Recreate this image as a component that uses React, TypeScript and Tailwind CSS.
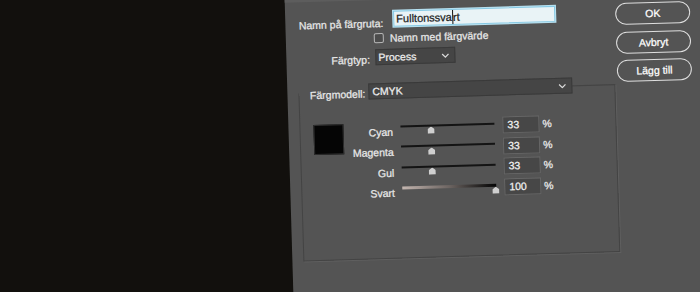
import React from "react";

const Chevron = () => (
  <svg width="8" height="5" viewBox="0 0 8 5" className="shrink-0">
    <polyline points="0.8,0.8 4,4 7.2,0.8" fill="none" stroke="#d8d8d8" strokeWidth="1.3" />
  </svg>
);

const Thumb = () => (
  <svg width="7" height="7" viewBox="0 0 7 7">
    <polygon points="3.5,0 7,2.6 7,7 0,7 0,2.6" fill="#cfcfcf" />
  </svg>
);

type Row = { label: string; value: number; gradient?: boolean };
const rows: Row[] = [
  { label: "Cyan", value: 33 },
  { label: "Magenta", value: 33 },
  { label: "Gul", value: 33 },
  { label: "Svart", value: 100, gradient: true },
];

export default function App() {
  return (
    <div className="relative w-[700px] h-[292px] overflow-hidden bg-[#12100d] font-['Liberation_Sans',Arial,sans-serif] text-[10.5px] text-[#e8e8e8] [-webkit-text-stroke-width:0.25px]">
      <div className="flex w-[740px] h-[340px] -ml-[20px] -mt-[24px] -rotate-[1.7deg]">
        <div className="w-[309px] h-full bg-[#12100d] shrink-0" />
        <div className="flex-1 h-full bg-[#545454] flex flex-col">
          <div className="h-[25px] bg-[#5d5d5d]" />
          <div className="flex">
            {/* left column */}
            <div className="w-[328px] flex flex-col shrink-0">
              <div className="flex h-[16px] mt-[11px]">
                <div className="w-[98px] text-right pt-[4px] leading-[16px] whitespace-nowrap">Namn på färgruta:</div>
                <div className="ml-[10px] w-[162px] h-[16px] bg-[#e9f3f6] border border-[#86c9e4] shadow-[0_0_0_1px_#b5e0f0] flex items-center pl-[2px] text-[11px] text-[#1e1e1e] leading-[14px]">
                  Fulltonssva
                  <span className="inline-block w-px h-[14px] bg-[#111]" />
                  rt
                </div>
              </div>
              <div className="flex items-center mt-[6px] pl-[88px] h-[10px]">
                <div className="w-[10px] h-[10px] border border-[#b8b8b8] rounded-[2px] bg-[#4c4c4c]" />
                <div className="ml-[6px] leading-[12px] whitespace-nowrap">Namn med färgvärde</div>
              </div>
              <div className="flex h-[16px] mt-[6px]">
                <div className="w-[83.5px] text-right pt-[2px] leading-[16px]">Färgtyp:</div>
                <div className="ml-[5.5px] w-[79.5px] h-[16px] bg-[#454545] border border-[#3a3a3a] flex items-center justify-between pl-[2px] pr-[5px] text-[#ececec] leading-[14px]">
                  <span>Process</span>
                  <Chevron />
                </div>
              </div>
              <fieldset className="mt-[18px] ml-[11px] w-[317px] h-[176px] border border-[#444] shadow-[1px_1px_0_#5f5f5f]">
                <legend className="p-0">
                  <div className="flex h-[16px] pl-[10.5px]">
                    <div className="w-[58.5px] leading-[16px] pt-[2px] whitespace-nowrap">Färgmodell:</div>
                    <div className="w-[204px] h-[16px] bg-[#454545] border border-[#3a3a3a] flex items-center justify-between pl-[3px] pr-[5px] text-[#ececec] leading-[14px]">
                      <span>CMYK</span>
                      <Chevron />
                    </div>
                  </div>
                </legend>
                <div className="flex">
                  <div className="ml-[13px] mt-[24px] w-[30px] h-[30px] bg-[#050505] border border-[#2e2e2e] shrink-0" />
                  <div className="mt-[21px] flex flex-col">
                    {rows.map((r) => (
                      <div key={r.label} className="flex items-start h-[20.5px]">
                        <div className="w-[49.5px] text-right leading-[16px] mt-[3.5px]">{r.label}</div>
                        <div className="relative ml-[7px] w-[94px] h-full">
                          <div
                            className={
                              r.gradient
                                ? "mt-[5px] h-[3px] bg-gradient-to-r from-[#c4b6b0] via-[#6d6562] to-[#060606]"
                                : "mt-[5.5px] h-[2px] bg-[#141414]"
                            }
                          />
                          <div className="absolute top-[8px] -ml-[3.5px]" style={{ left: `${r.value}%` }}>
                            <Thumb />
                          </div>
                        </div>
                        <div className="ml-[8.5px] w-[37px] h-[17px] bg-[#474747] border border-[#666] pl-[4px] leading-[15px] text-[#f0f0f0]">
                          {r.value}
                        </div>
                        <div className="ml-[3px] leading-[16px]">%</div>
                      </div>
                    ))}
                  </div>
                </div>
              </fieldset>
            </div>
            {/* buttons */}
            <div className="w-[75px] ml-[2px] pt-[10px] flex flex-col gap-[6.5px] shrink-0">
              {["OK", "Avbryt", "Lägg till"].map((b) => (
                <div
                  key={b}
                  className="h-[22px] rounded-full border-[1.5px] border-[#dedede] flex items-center justify-center text-white leading-[14px]"
                >
                  {b}
                </div>
              ))}
            </div>
          </div>
        </div>
      </div>
    </div>
  );
}
